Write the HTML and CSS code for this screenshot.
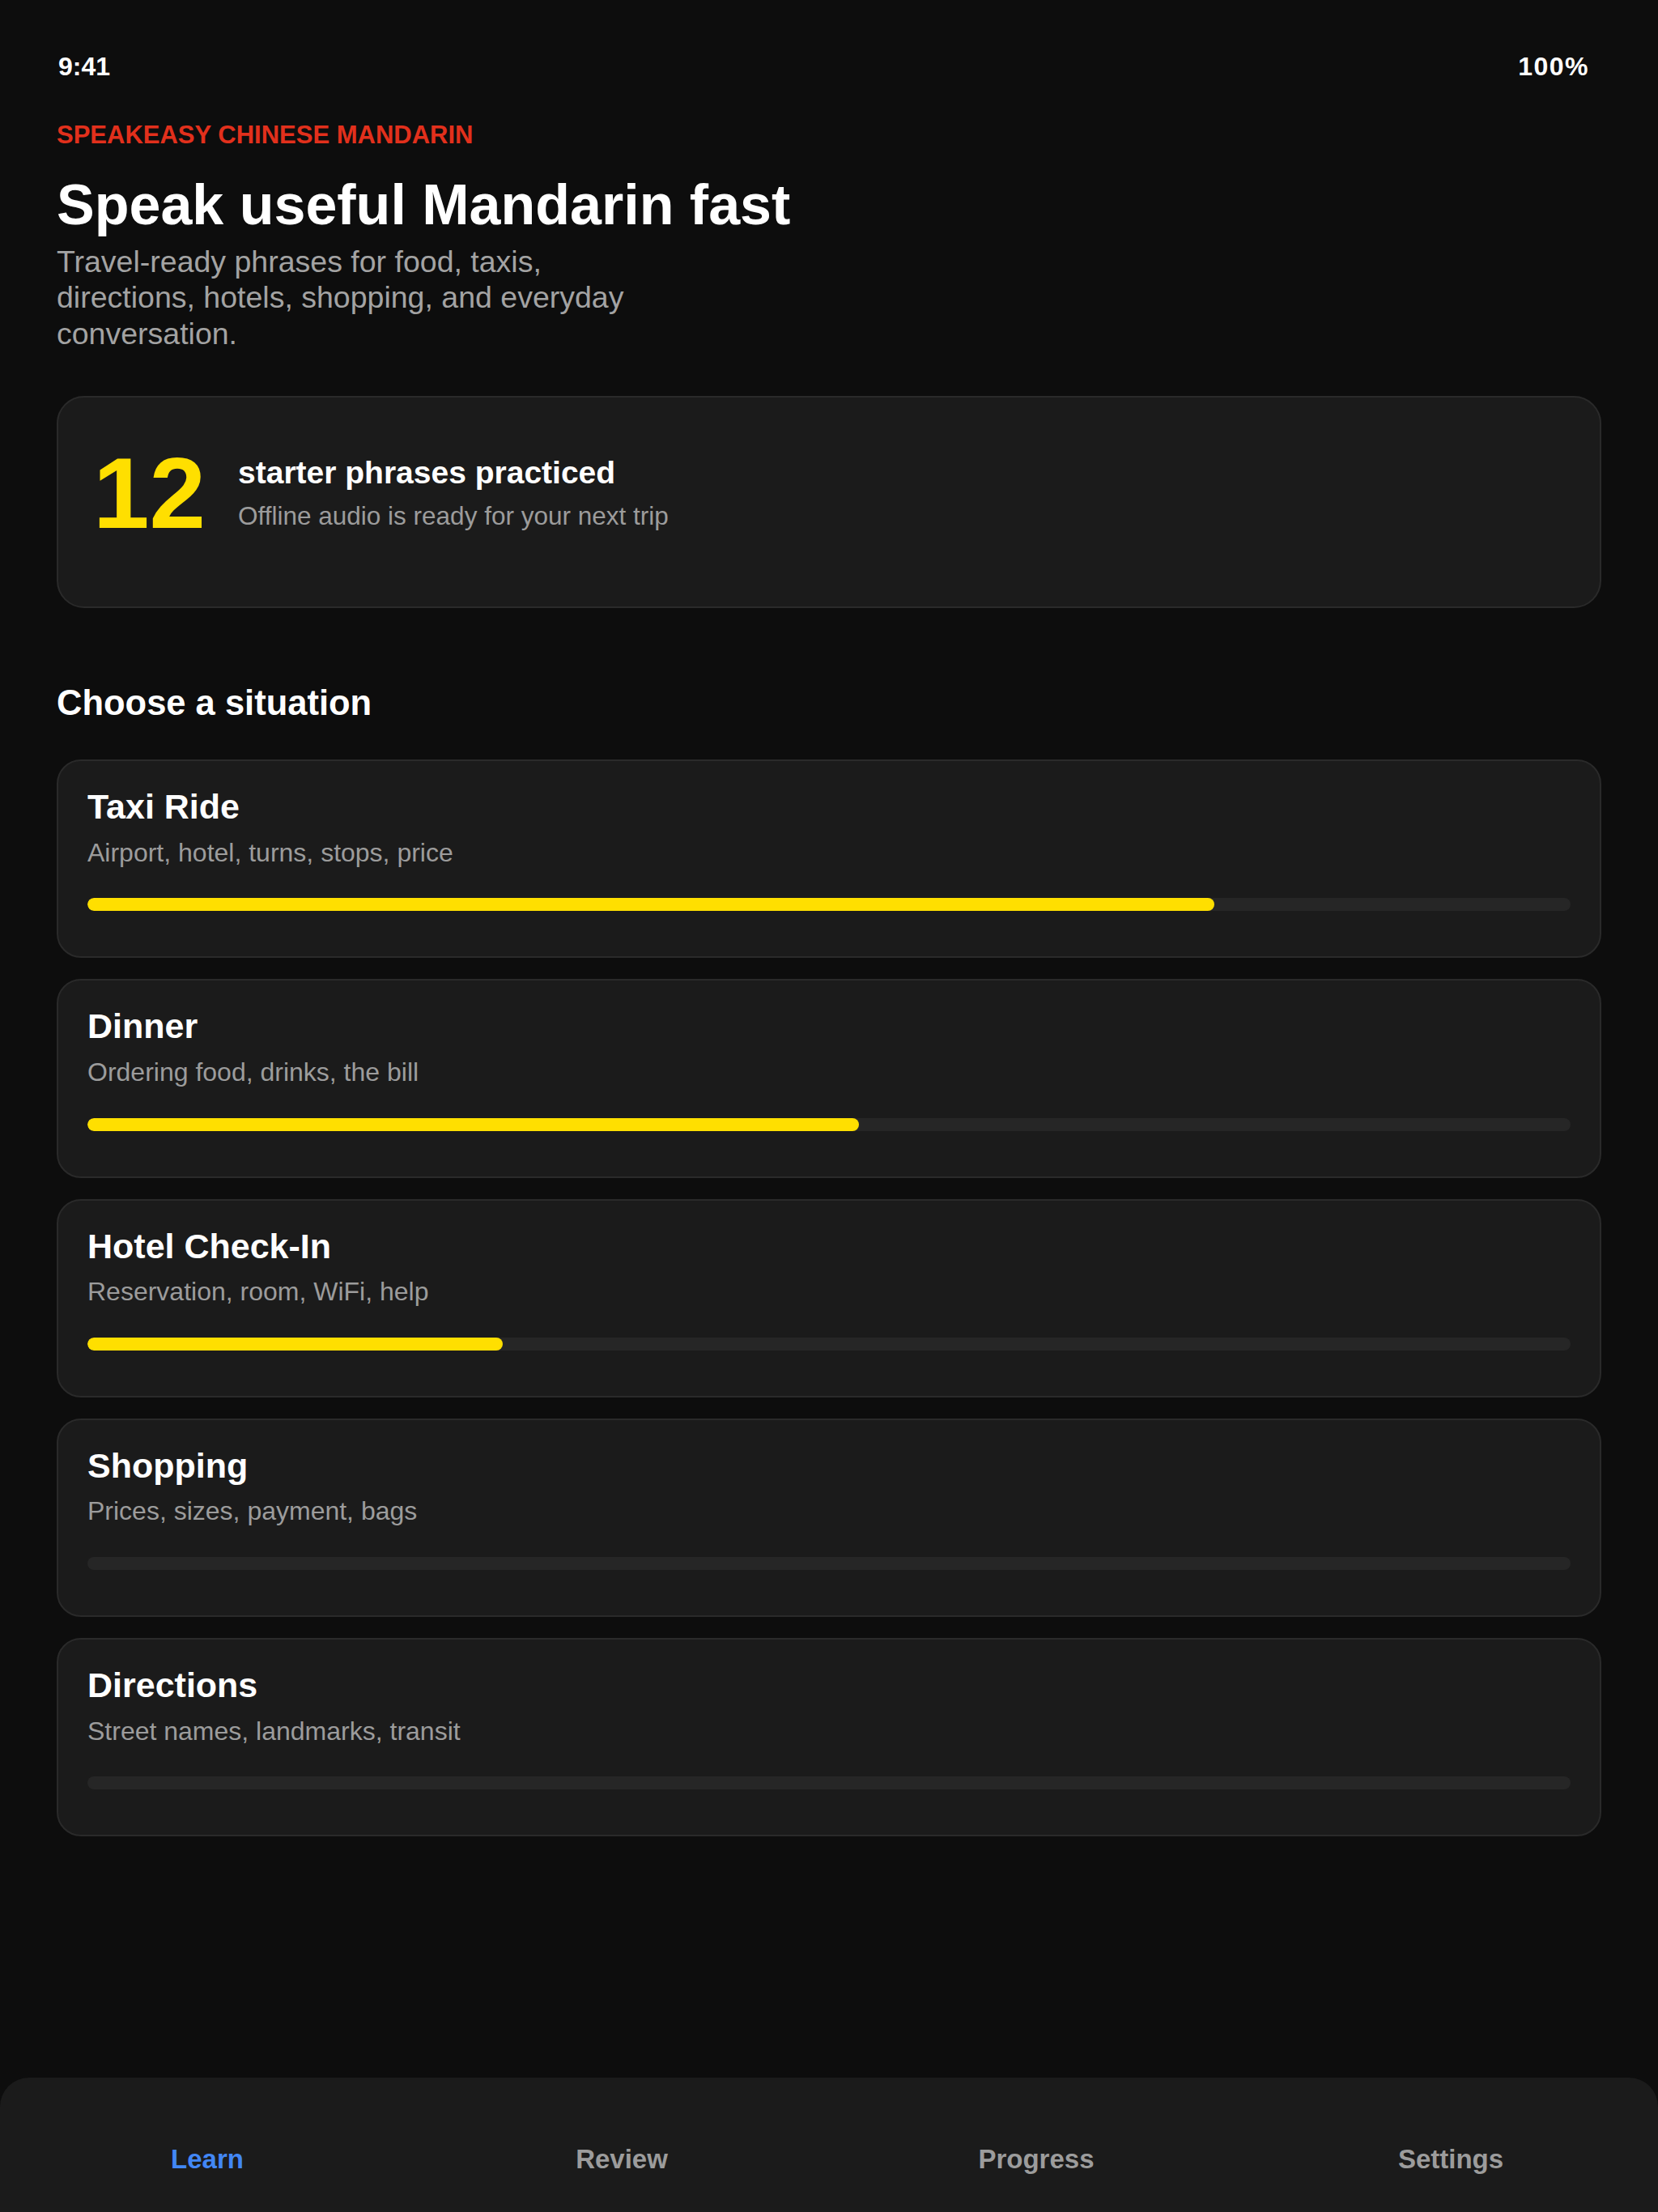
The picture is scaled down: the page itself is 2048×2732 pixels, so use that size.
FILE: index.html
```html
<!DOCTYPE html>
<html lang="en">
<head>
    <meta charset="UTF-8">
    <meta name="viewport" content="width=device-width, initial-scale=1.0">
    <title>SpeakEasy Chinese Mandarin</title>
    <link rel="stylesheet" href="styles.css">
</head>
<body>

<div class="app">

    <!-- Status bar -->
    <div class="status-bar">
        <span>9:41</span>
        <span class="battery">100%</span>
    </div>

    <main class="content">
        <p class="eyebrow">SPEAKEASY CHINESE MANDARIN</p>
        <h1 class="title">Speak useful Mandarin fast</h1>
        <p class="lede">Travel-ready phrases for food, taxis, directions, hotels, shopping, and everyday conversation.</p>

        <section class="stats-card">
            <div class="stats-number">12</div>
            <div class="stats-text">
                <div class="stats-label">starter phrases practiced</div>
                <div class="stats-sub">Offline audio is ready for your next trip</div>
            </div>
        </section>

        <h2 class="section-title">Choose a situation</h2>

        <div class="situations">
            <div class="situation">
                <div class="situation-name">Taxi Ride</div>
                <div class="situation-desc">Airport, hotel, turns, stops, price</div>
                <div class="track"><div class="fill" style="width: 76%"></div></div>
            </div>
            <div class="situation">
                <div class="situation-name">Dinner</div>
                <div class="situation-desc">Ordering food, drinks, the bill</div>
                <div class="track"><div class="fill" style="width: 52%"></div></div>
            </div>
            <div class="situation">
                <div class="situation-name">Hotel Check-In</div>
                <div class="situation-desc">Reservation, room, WiFi, help</div>
                <div class="track"><div class="fill" style="width: 28%"></div></div>
            </div>
            <div class="situation">
                <div class="situation-name">Shopping</div>
                <div class="situation-desc">Prices, sizes, payment, bags</div>
                <div class="track"><div class="fill" style="width: 0%"></div></div>
            </div>
            <div class="situation">
                <div class="situation-name">Directions</div>
                <div class="situation-desc">Street names, landmarks, transit</div>
                <div class="track"><div class="fill" style="width: 0%"></div></div>
            </div>
        </div>
    </main>

    <!-- Tab bar -->
    <nav class="tab-bar">
        <a class="tab active">Learn</a>
        <a class="tab">Review</a>
        <a class="tab">Progress</a>
        <a class="tab">Settings</a>
    </nav>

</div>

</body>
</html>
```

FILE: styles.css
```css
body {
    margin: 0;
    background-color: #0d0d0d;
    color: #fff;
    font-family: "Liberation Sans", Arial, sans-serif;
    line-height: 1.15;
}

.app {
    display: flex;
    flex-direction: column;
    min-height: 100vh;
}

.status-bar {
    display: flex;
    justify-content: space-between;
    padding: 64px 85px 0 72px;
    font-size: 32px;
    font-weight: bold;
}

.battery {
    letter-spacing: 1.5px;
}

.content {
    padding: 0 70px;
}

.eyebrow {
    margin: 48px 0 0;
    color: #e2301c;
    font-size: 31px;
    font-weight: bold;
}

.title {
    margin: 29px 0 0;
    font-size: 70px;
    font-weight: bold;
}

.lede {
    margin: 7px 0 0;
    max-width: 750px;
    color: #a3a3a3;
    font-size: 37.5px;
    line-height: 44.4px;
}

.stats-card {
    display: flex;
    align-items: center;
    gap: 40px;
    margin-top: 55px;
    padding: 55px 36px 78px 43px;
    background-color: #1b1b1b;
    border: 2px solid #2a2a2a;
    border-radius: 34px;
}

.stats-number {
    color: #ffdf00;
    font-size: 125px;
    font-weight: bold;
    line-height: 1;
}

.stats-label {
    font-size: 39px;
    font-weight: bold;
}

.stats-sub {
    margin-top: 12px;
    color: #9c9c9c;
    font-size: 31.5px;
}

.section-title {
    margin: 92px 0 0;
    font-size: 43.5px;
    font-weight: bold;
}

.situations {
    display: flex;
    flex-direction: column;
    gap: 26px;
    margin-top: 45px;
}

.situation {
    padding: 32px 36px 56px;
    background-color: #1b1b1b;
    border: 2px solid #2a2a2a;
    border-radius: 30px;
}

.situation-name {
    font-size: 43px;
    font-weight: bold;
}

.situation-desc {
    margin-top: 13px;
    color: #9c9c9c;
    font-size: 32px;
}

.track {
    margin-top: 38px;
    height: 16px;
    background-color: #262626;
    border-radius: 8px;
    overflow: hidden;
}

.fill {
    height: 100%;
    background-color: #ffdf00;
    border-radius: 8px;
}

.tab-bar {
    display: grid;
    grid-template-columns: repeat(4, 1fr);
    margin-top: auto;
    height: 166px;
    box-sizing: border-box;
    padding-top: 82px;
    background-color: #1b1b1b;
    border-radius: 36px 36px 0 0;
}

.tab {
    text-align: center;
    color: #9c9c9c;
    font-size: 33px;
    font-weight: bold;
}

.tab.active {
    color: #4287f5;
}
```
